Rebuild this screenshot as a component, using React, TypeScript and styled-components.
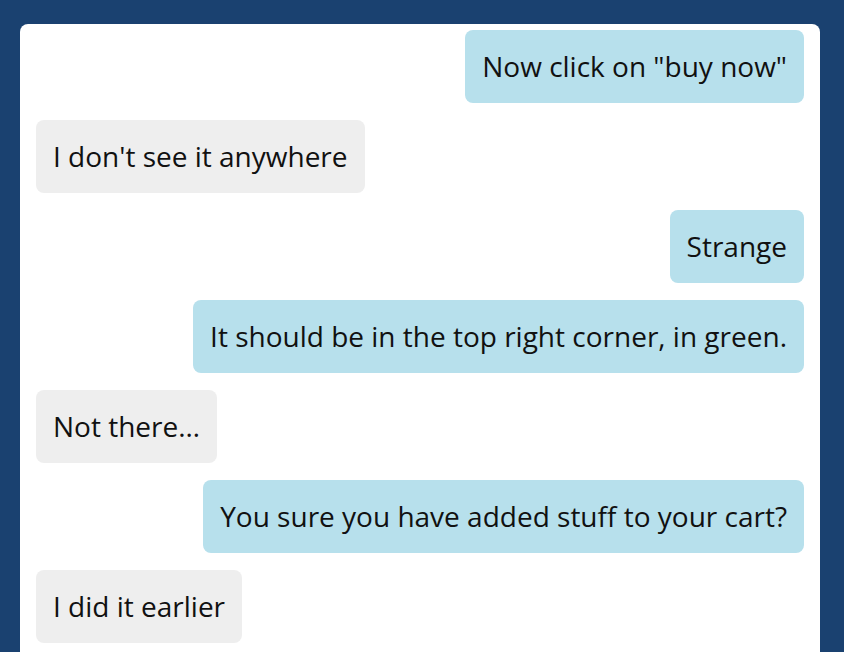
import React from "react";
import styled, { createGlobalStyle } from "styled-components";

const Global = createGlobalStyle`
  html, body { margin: 0; padding: 0; background: #1a4170; height: 100%; overflow: hidden; }
  body { font-family: "Open Sans", "Noto Sans", sans-serif; }
`;

const Page = styled.div`
  padding: 24px 24px 0 20px;
  width: 800px;
`;

const Panel = styled.div`
  background: #ffffff;
  border-radius: 8px 8px 0 0;
  padding: 6px 16px 16px;
  display: flex;
  flex-direction: column;
  gap: 17px;
  height: 640px;
  box-sizing: border-box;
`;

const Bubble = styled.div<{ $mine: boolean }>`
  align-self: ${(p) => (p.$mine ? "flex-end" : "flex-start")};
  background: ${(p) => (p.$mine ? "#b7e0ec" : "#eeeeee")};
  color: #111;
  border-radius: 8px;
  padding: 17px 17px;
  font-size: 28px;
  line-height: 39px;
  white-space: nowrap;
`;

const messages: { text: string; mine: boolean }[] = [
  { text: 'Now click on "buy now"', mine: true },
  { text: "I don't see it anywhere", mine: false },
  { text: "Strange", mine: true },
  { text: "It should be in the top right corner, in green.", mine: true },
  { text: "Not there…", mine: false },
  { text: "You sure you have added stuff to your cart?", mine: true },
  { text: "I did it earlier", mine: false },
];

export default function App() {
  return (
    <>
      <Global />
      <Page>
        <Panel>
          {messages.map((m, i) => (
            <Bubble key={i} $mine={m.mine}>
              {m.text}
            </Bubble>
          ))}
        </Panel>
      </Page>
    </>
  );
}
